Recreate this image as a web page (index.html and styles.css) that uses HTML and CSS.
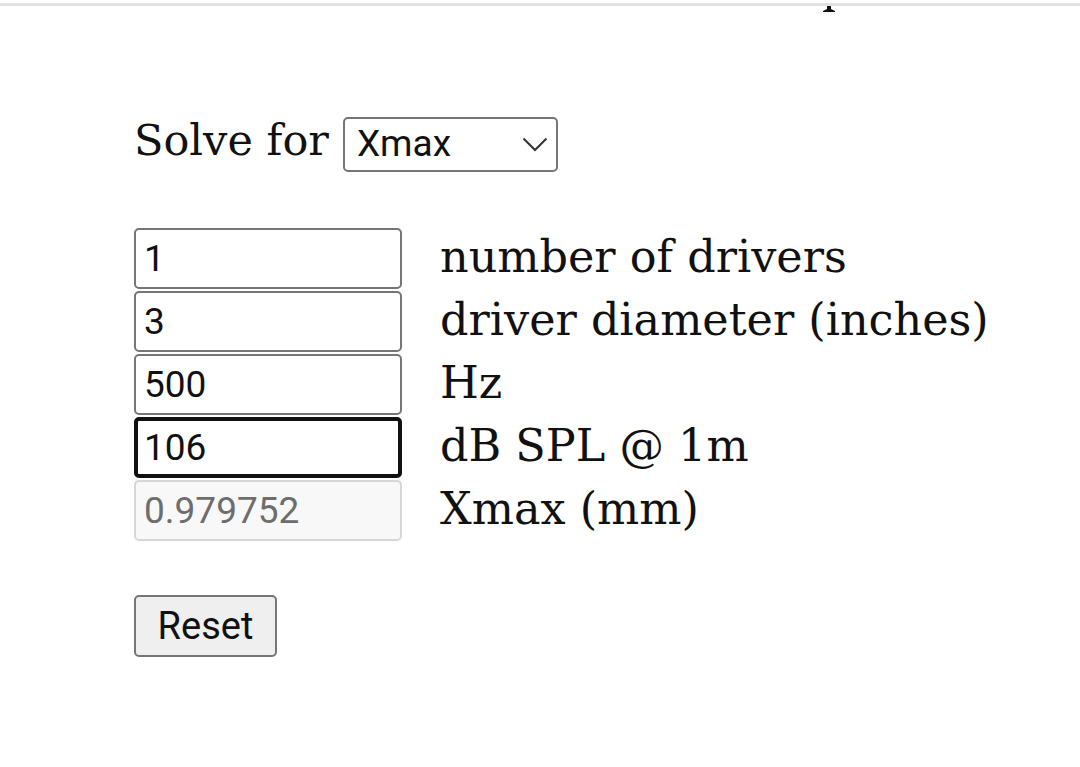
FILE: index.html
```html
<!DOCTYPE html>
<html>
<head>
<meta charset="utf-8">
<link rel="stylesheet" href="styles.css">
</head>
<body>
<div class="topbar">
  <div class="topline"></div>
  <svg class="topmark" width="14" height="6" viewBox="0 0 14 6"><path d="M5 0 H9 V3 L13 5 V6 H1 V5 L5 3 Z" fill="#111"/></svg>
</div>
<main class="page">
  <div class="solve">
    <span class="solve-label">Solve for</span>
    <div class="select-wrap">
      <select class="select">
        <option>Xmax</option>
      </select>
      <svg class="chev" width="26" height="15" viewBox="0 0 26 15"><path d="M1.5 1.5 L13 13 L24.5 1.5" fill="none" stroke="#333" stroke-width="2"/></svg>
    </div>
  </div>
  <div class="rows">
    <div class="row"><input class="field" value="1"><span class="label">number of drivers</span></div>
    <div class="row"><input class="field" value="3"><span class="label">driver diameter (inches)</span></div>
    <div class="row"><input class="field" value="500"><span class="label">Hz</span></div>
    <div class="row"><input class="field focus" value="106"><span class="label">dB SPL @ 1m</span></div>
    <div class="row"><input class="field" value="0.979752" disabled><span class="label">Xmax (mm)</span></div>
  </div>
  <button class="reset">Reset</button>
</main>
</body>
</html>
```

FILE: styles.css
```css
html, body {
  margin: 0;
  padding: 0;
  background: #fff;
}
body {
  font-family: "DejaVu Serif", serif;
  font-size: 44.5px;
  color: #111;
}
.topbar {
  position: relative;
  padding-top: 3px;
  height: 8px;
}
.topline {
  height: 3px;
  background: #e2e2e2;
}
.topmark {
  position: absolute;
  left: 822px;
  top: 6px;
}
.page {
  padding-left: 134px;
  padding-top: 106px;
}
.solve {
  display: flex;
  align-items: center;
  gap: 14px;
  height: 55px;
}
.solve-label {
  font-size: 43px;
  line-height: 55px;
  position: relative;
  top: -4px;
}
.select-wrap {
  position: relative;
  width: 215px;
  height: 55px;
}
.select {
  display: block;
  appearance: none;
  -webkit-appearance: none;
  width: 215px;
  height: 55px;
  box-sizing: border-box;
  border: 2px solid #767676;
  border-radius: 5px;
  background: #fff;
  font-family: Roboto, sans-serif;
  font-size: 37px;
  color: #111;
  padding: 0 0 3px 12px;
  margin: 0;
}
.chev {
  position: absolute;
  left: 179px;
  top: 20px;
  pointer-events: none;
}
.rows {
  margin-top: 56px;
  display: flex;
  flex-direction: column;
  gap: 2px;
}
.row {
  display: flex;
  align-items: center;
  height: 61px;
}
.field {
  width: 268px;
  height: 61px;
  box-sizing: border-box;
  border: 2px solid #767676;
  border-radius: 5px;
  background: #fff;
  font-family: Roboto, sans-serif;
  font-size: 37px;
  color: #111;
  padding: 0 0 0 8px;
  margin: 0;
  outline: none;
}
.field.focus {
  border: 4px solid #111;
  padding-left: 6px;
}
.field:disabled {
  border-color: #d6d6d6;
  background: #f8f8f8;
  color: #6d6d6d;
}
.label {
  margin-left: 38px;
  position: relative;
  top: -2px;
  white-space: nowrap;
}
.reset {
  margin-top: 54px;
  width: 143px;
  height: 62px;
  box-sizing: border-box;
  border: 2px solid #767676;
  border-radius: 5px;
  background: #efefef;
  font-family: Roboto, sans-serif;
  font-size: 38px;
  color: #111;
  padding: 0;
}
```
